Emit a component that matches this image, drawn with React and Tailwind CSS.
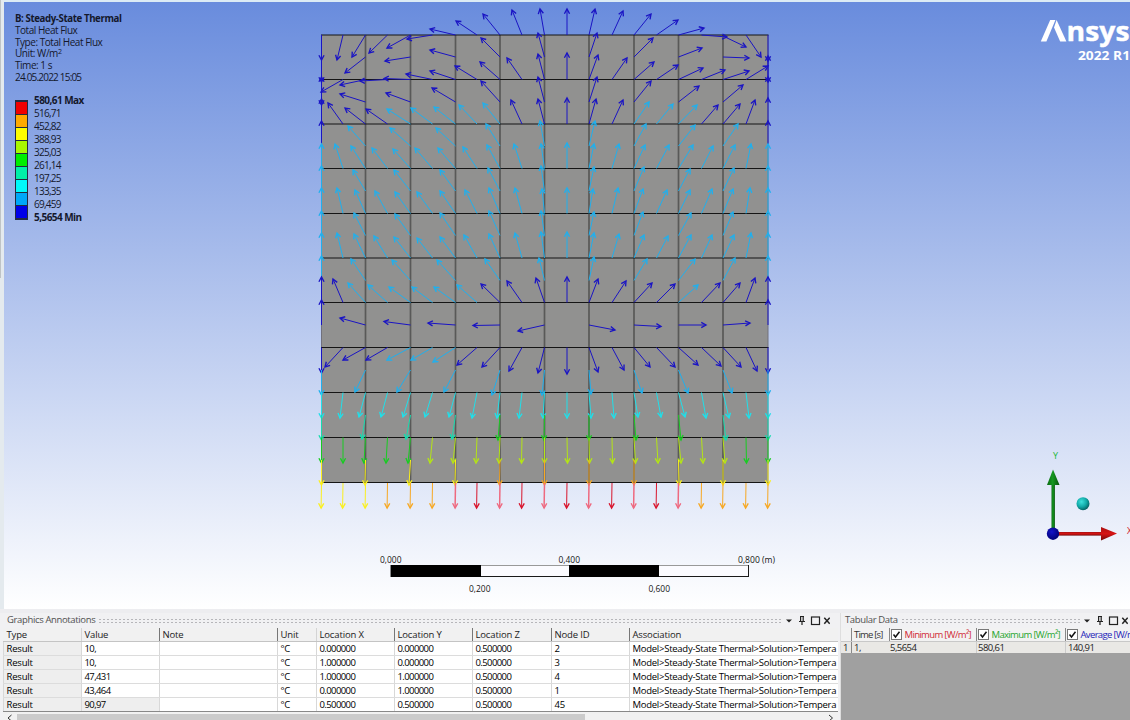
import React from "react";

const B = "#1a14c4";
const C = "#1fb0ee";
const Q = "#1fe0ea";
const T = "#16dcae";
const G = "#18cc22";
const L = "#b4e416";
const Y = "#fbf01e";
const O = "#f7a823";
const R = "#d8142c";
const P = "#ee6a80";

const X = [321.5, 343, 365.5, 387.5, 410.5, 432.5, 455.5, 477, 500, 522, 544.5, 567, 589, 612, 634, 656.5, 678.5, 701.5, 723, 746, 768];

// Each vector: [column index, start y, tip x, tip y, colour]
const full = (y, color, tips) => tips.map(([i, tx, ty, c]) => [i, y, tx, ty, c || color]);

const vectors = [
  ...full(35, B, [[0, 321, 60], [1, 337, 60], [2, 352, 57], [3, 369, 53], [4, 387, 48], [5, 407, 39], [6, 430, 29], [7, 456, 21], [8, 483, 14], [9, 512, 10], [10, 540, 9], [11, 567, 9], [12, 595, 9], [13, 623, 11], [14, 651, 14], [15, 678, 20], [16, 704, 28], [17, 727, 37], [19, 761, 57], [20, 768, 61]]),
  [18, 36, 746, 47, B],
  ...full(57, B, [[0, 321, 82], [2, 345, 73], [4, 385, 61], [6, 430, 50], [8, 481, 38], [10, 538, 33], [12, 597, 33], [14, 653, 38], [16, 702, 48], [18, 749, 58], [20, 768, 82]]),
  ...full(79.5, B, [[0, 321, 105], [1, 321, 92], [2, 340, 85], [3, 360, 81], [4, 384, 78.5], [5, 406, 74], [6, 430, 71], [7, 455, 66], [8, 480, 62], [9, 507, 58], [10, 538, 54], [11, 567, 53], [12, 598, 55], [13, 627, 58], [14, 654, 62], [15, 678, 65], [16, 703, 68], [17, 725, 70], [18, 749, 71], [19, 768, 66], [20, 768, 56]]),
  ...full(102, B, [[0, 321, 77], [2, 340, 94], [4, 386, 93], [6, 432, 88], [8, 481, 81], [10, 538, 77], [12, 597, 77], [14, 651, 81], [16, 699, 86], [18, 743, 85], [20, 768, 77]]),
  ...full(124, B, [[0, 321, 99], [1, 328, 103], [2, 345, 108], [3, 366, 109], [4, 387, 109, C], [5, 411, 108, C], [6, 434, 107, C], [7, 459, 105, C], [8, 483, 103, C], [9, 511, 100], [10, 538, 99], [11, 567, 98], [12, 596, 99], [13, 623, 100], [14, 649, 102, C], [15, 673, 104, C], [16, 697, 105, C], [17, 718, 105], [18, 740, 104], [19, 755, 100], [20, 768, 98]]),
  ...full(146, C, [[0, 321, 121, B], [2, 348, 126], [4, 390, 128], [6, 436, 128], [8, 486, 124], [10, 540, 121], [12, 595, 121], [14, 646, 124], [16, 695, 125], [18, 738, 124], [20, 768, 121, B]]),
  ...full(168.5, C, [[0, 321, 144], [1, 335, 144], [2, 351, 146], [3, 372, 148], [4, 393, 149], [5, 415, 148], [6, 438, 148], [7, 463, 147], [8, 487, 145], [9, 514, 144], [10, 541, 144], [11, 567, 143], [12, 594, 144], [13, 619, 144], [14, 645, 145], [15, 669, 145], [16, 693, 145], [17, 713, 146], [18, 735, 145], [19, 751, 144], [20, 768, 144]]),
  ...full(191, C, [[0, 321, 166], [2, 353, 170], [4, 394, 170], [6, 440, 170], [8, 488, 168], [10, 541, 166], [12, 594, 167], [14, 644, 167], [16, 690, 169], [18, 734, 168], [20, 768, 166]]),
  ...full(213.5, C, [[0, 321, 188], [1, 337, 188], [2, 355, 190], [3, 375, 191], [4, 395, 192], [5, 417, 192], [6, 440, 191], [7, 465, 190], [8, 489, 188], [9, 515, 188], [10, 542, 189], [11, 567, 188], [12, 593, 189], [13, 618, 188], [14, 643, 189], [15, 667, 190], [16, 690, 190], [17, 712, 189], [18, 733, 189], [19, 750, 188], [20, 768, 188]]),
  ...full(235.5, C, [[0, 321, 211], [2, 354, 213], [4, 395, 214], [6, 440, 213], [8, 489, 211], [10, 541, 211], [12, 594, 212], [14, 643, 212], [16, 691, 213], [18, 733, 212], [20, 768, 211]]),
  ...full(258, C, [[0, 321, 233], [1, 337, 233], [2, 354, 234], [3, 374, 236], [4, 394, 237], [5, 417, 238], [6, 440, 237], [7, 464, 235], [8, 489, 234], [9, 515, 233], [10, 541, 232], [11, 567, 232], [12, 594, 233], [13, 619, 234], [14, 644, 235], [15, 668, 236], [16, 691, 235], [17, 712, 235], [18, 734, 235], [19, 751, 233], [20, 768, 233]]),
  ...full(280.5, C, [[0, 321, 256], [2, 351, 259], [4, 392, 260], [6, 437, 260], [8, 485, 259], [10, 539, 258], [12, 594, 257], [14, 647, 259], [16, 695, 259], [18, 735, 258], [20, 768, 256]]),
  ...full(302.5, B, [[0, 321, 277], [1, 333, 279], [2, 348, 283, C], [3, 368, 285, C], [4, 389, 287, C], [5, 412, 287, C], [6, 434, 287, C], [7, 457, 285, C], [8, 481, 284], [9, 507, 281], [10, 536, 278], [11, 567, 277], [12, 598, 279], [13, 626, 281], [14, 652, 283], [15, 675, 284], [16, 698, 285, C], [17, 720, 283], [18, 740, 283], [19, 755, 278], [20, 768, 277]]),
  ...full(325, B, [[0, 321, 300], [2, 340, 318], [4, 384, 321.5], [6, 428, 323], [8, 473, 325.5], [10, 518, 331], [12, 615, 330], [14, 661, 326.5], [16, 706, 325], [18, 750, 323], [20, 768, 300]]),
  ...full(347.5, B, [[0, 321, 373], [1, 325, 367], [2, 343, 360], [3, 366, 360], [4, 387, 360, C], [5, 411, 360, C], [6, 433, 362, C], [7, 457, 365], [8, 482, 367], [9, 509, 371], [10, 538, 373], [11, 567, 374], [12, 598, 372], [13, 624, 370], [14, 650, 367], [15, 675, 367], [16, 698, 365], [17, 721, 366], [18, 741, 367], [19, 757, 371], [20, 768, 373]]),
  ...full(370, C, [[0, 321, 395], [2, 355, 392], [4, 397, 392], [6, 444, 392], [8, 492, 395], [10, 542, 395], [12, 591, 394], [14, 642, 393], [16, 688, 393], [18, 732, 393], [20, 768, 395]]),
  ...full(392.5, Q, [[0, 321, 418], [1, 340, 418], [2, 359, 417], [3, 381, 417], [4, 403, 417], [5, 425, 417], [6, 449, 417], [7, 472, 418], [8, 497, 418], [9, 519, 418], [10, 543, 418], [11, 567, 418], [12, 591, 418], [13, 614, 418], [14, 638, 417], [15, 661, 417], [16, 685, 417], [17, 706, 418], [18, 729, 418], [19, 749, 418], [20, 768, 418]]),
  ...full(415, T, [[0, 321, 440], [2, 362, 439], [4, 406, 439], [6, 452, 439], [8, 498, 440, G], [10, 544, 440, G], [12, 589, 440, G], [14, 636, 440, G], [16, 681, 440, G], [18, 726, 440], [20, 768, 440]]),
  ...full(437.5, L, [[0, 321, 463, G], [1, 343, 463, G], [2, 364, 463, G], [3, 386, 463, G], [4, 408, 463, G], [5, 430, 463], [6, 453, 463], [7, 476, 463], [8, 499, 463], [9, 521.5, 463], [10, 544.5, 463], [11, 567.5, 463], [12, 589.5, 463], [13, 612.5, 463], [14, 635.5, 463], [15, 658, 463], [16, 681, 463], [17, 703, 463], [18, 725, 463], [19, 746.5, 463, G], [20, 768, 463, G]]),
  ...full(460, Y, [[0, 321, 485], [2, 365, 485], [4, 409, 485], [6, 455, 485], [8, 499.5, 485, O], [10, 544.5, 485, O], [12, 589, 485, O], [14, 634, 485, O], [16, 679, 485], [18, 723, 485], [20, 768, 485]]),
  ...[Y, Y, Y, O, O, O, P, R, P, R, P, R, P, R, P, R, P, O, O, O, O].map((c, i) => [i, 483, X[i] - 0.4, 508, c]),
];

function Vector({ x, y, tx, ty, color }) {
  const a = Math.atan2(ty - y, tx - x);
  const s = 5.4;
  const p = (d) => `${tx - s * Math.cos(a + d)} ${ty - s * Math.sin(a + d)}`;
  return (
    <g stroke={color} fill="none">
      <path d={`M${x} ${y}L${tx} ${ty}`} strokeWidth={color === P ? 1.5 : 1} />
      <path d={`M${p(0.5)}L${tx} ${ty}L${p(-0.5)}`} strokeWidth="1.35" />
    </g>
  );
}

function Field() {
  const rows = [35, 79.5, 124, 168.5, 213.5, 258, 302.5, 347.5, 392.5, 437.5, 482.5];
  return (
    <g>
      <rect x="321.5" y="35" width="446.5" height="447.5" fill="#919190" />
      {X.filter((_, i) => i % 2 === 0).map((x, i) => (
        <path key={i} d={`M${x} 35V482.5`} stroke={i === 0 || i === 10 ? "#70707c" : "#595958"} strokeWidth={i === 0 || i === 10 ? 1 : 1.7} />
      ))}
      {rows.map((y) => <path key={y} d={`M321 ${y}H768.5`} stroke="#151515" strokeWidth="1.1" />)}
      {vectors.map(([i, y, tx, ty, c], k) => <Vector key={k} x={X[i]} y={y} tx={i === 0 && tx === 321 ? 321.5 : tx} ty={ty} color={c} />)}
    </g>
  );
}

function Ruler() {
  const label = (x, y, w, t) => (
    <text x={x} y={y} textLength={w} lengthAdjust="spacingAndGlyphs" fontSize="9.3" fill="#151515">{t}</text>
  );
  return (
    <g>
      <rect x="391" y="565.5" width="357.5" height="11" fill="#fbfbff" stroke="#1a1a1a" />
      <path d="M391 565.5H748" stroke="#999" />
      <path d="M391 565H481V577H391ZM569 565H659V577H569Z" fill="#000" />
      {label(380, 562.5, 21.5, "0,000")}
      {label(558.5, 562.5, 21.5, "0,400")}
      {label(738, 562.5, 37, "0,800 (m)")}
      {label(469, 591.5, 21.5, "0,200")}
      {label(648.5, 591.5, 21.5, "0,600")}
    </g>
  );
}

function Triad() {
  return (
    <g>
      <defs>
        <radialGradient id="teal" cx=".38" cy=".35" r=".7"><stop offset="0" stopColor="#3ee0dc" /><stop offset=".55" stopColor="#12aaa8" /><stop offset="1" stopColor="#055a5c" /></radialGradient>
        <radialGradient id="blue" cx=".4" cy=".35" r=".7"><stop offset="0" stopColor="#1414c8" /><stop offset="1" stopColor="#000070" /></radialGradient>
        <linearGradient id="green" x1="0" x2="1"><stop offset="0" stopColor="#0a6a12" /><stop offset=".45" stopColor="#159820" /><stop offset="1" stopColor="#07520b" /></linearGradient>
        <linearGradient id="red" x1="0" x2="0" y1="0" y2="1"><stop offset="0" stopColor="#a81010" /><stop offset=".5" stopColor="#d81414" /><stop offset="1" stopColor="#720808" /></linearGradient>
      </defs>
      <rect x="1051.5" y="484" width="3.4" height="46" fill="url(#green)" />
      <path d="M1053 469.5L1059.5 485H1047Z" fill="url(#green)" />
      <rect x="1056" y="532" width="46" height="3.6" fill="url(#red)" />
      <path d="M1117 533.5L1101 527V540.5Z" fill="url(#red)" />
      <circle cx="1053" cy="533.7" r="6.2" fill="url(#blue)" />
      <circle cx="1083" cy="503.7" r="6.5" fill="url(#teal)" />
      <text x="1053" y="459" fontSize="9" fill="#20b838">Y</text>
      <text x="1127" y="534" fontSize="9" fill="#d02030">X</text>
    </g>
  );
}

const scale = [
  ["bg-[#f00000]", "516,71"],
  ["bg-[#ffaa00]", "452,82"],
  ["bg-[#fdfd00]", "388,93"],
  ["bg-[#a8f800]", "325,03"],
  ["bg-[#00ee00]", "261,14"],
  ["bg-[#00f0a8]", "197,25"],
  ["bg-[#00fafa]", "133,35"],
  ["bg-[#00a8f8]", "69,459"],
  ["bg-[#0000e8]", "5,5654 Min"],
];

function Legend() {
  return (
    <div className="pl-[15px] pt-[11px] text-[10px] leading-[11.75px] text-[#14182c]">
      <div className="text-[9.7px] font-bold tracking-[-0.41px]">B: Steady-State Thermal</div>
      <div className="tracking-[-0.48px]">Total Heat Flux</div>
      <div className="tracking-[-0.46px]">Type: Total Heat Flux</div>
      <div className="tracking-[-0.44px]">Unit: W/m<span className="relative -top-[3px] text-[7px] leading-none">2</span></div>
      <div className="tracking-[-0.46px]">Time: 1 s</div>
      <div className="tracking-[-0.8px]">24.05.2022 15:05</div>
      <div className="mt-[16px] flex items-start">
        <div className="w-[13px] border border-b-2 border-t-2 border-[#222b40]">
          {scale.map(([c], i) => <div key={i} className={`h-[12.9px] ${i ? "border-t border-[#222b40]" : ""} ${c}`} />)}
        </div>
        <div className="-mt-[6px] ml-[6px] leading-[13.02px] tracking-[-0.75px]">
          <div className="font-bold tracking-[-0.55px]">580,61 Max</div>
          {scale.map(([, t], i) => <div key={t} className={i === 8 ? "font-bold tracking-[-0.55px]" : ""}>{t}</div>)}
        </div>
      </div>
    </div>
  );
}

function Logo() {
  return (
    <svg className="absolute right-0 top-0 h-[80px] w-[130px]" viewBox="0 0 130 80" fill="#fff">
      <path d="M50.2 18H55.4L46.4 39.4H40.8Z" />
      <path d="M56.6 18L66.4 39.4H60.2L54 25.6Z" />
      <text x="66.5" y="39.4" textLength="63" lengthAdjust="spacingAndGlyphs" fontFamily="Open Sans" fontWeight="700" fontSize="26.5" stroke="#fff" strokeWidth=".4">nsys</text>
      <text x="78" y="58.3" textLength="52" lengthAdjust="spacingAndGlyphs" fontFamily="Open Sans" fontWeight="700" fontSize="12.6">2022 R1</text>
    </svg>
  );
}

function PanelTitle({ title, className }) {
  return (
    <div className={`flex h-[15px] items-center pl-[4px] text-[9.5px] text-[#505050] ${className}`}>
      <span className="whitespace-nowrap tracking-[-0.36px]">{title}</span>
      <div className="ml-[3px] mr-[4px] h-[6px] grow bg-[radial-gradient(circle,#b6b6ba_0.7px,transparent_0.9px)] bg-[length:4px_3px]" />
      <svg width="44" height="12" viewBox="0 0 44 12" fill="none" stroke="#222" strokeWidth="1.2">
        <path d="M0 4.5H6L3 7.5Z" fill="#222" stroke="none" />
        <path d="M14 1.5H18M14.6 1.5V6.5M17.2 1.5V6.5M13 6.5H19M16 6.5V10" />
        <rect x="25.5" y="2" width="8" height="7.5" />
        <path d="M38.3 2.8L43.7 8.8M43.7 2.8L38.3 8.8" strokeWidth="1.5" />
      </svg>
    </div>
  );
}

const cols = "grid grid-cols-[78px_78px_118px_39px_78px_78px_79px_78px_1fr]";
const data = [
  ["10,", "0.000000", "0.000000", "2"],
  ["10,", "1.000000", "0.000000", "3"],
  ["47,431", "1.000000", "1.000000", "4"],
  ["43,464", "0.000000", "1.000000", "1"],
  ["90,97", "0.500000", "0.500000", "45"],
];

function Annotations() {
  return (
    <section className="flex w-[838px] shrink-0 flex-col pl-[3px]">
      <PanelTitle title="Graphics Annotations" className="pr-[8px]" />
      <div className={`${cols} h-[14px] border-b border-[#c4c4c4] bg-[#f1f1f1] text-[9.5px] leading-[13px] text-[#222]`}>
        {["Type", "Value", "Note", "Unit", "Location X", "Location Y", "Location Z", "Node ID", "Association"].map((h, i) => (
          <div key={h} className={`truncate border-l pl-[2.5px] tracking-[-0.15px] ${i === 0 ? "border-transparent" : i === 1 || i === 4 ? "border-[#d4d4d4]" : "border-[#777]"}`}>{h}</div>
        ))}
      </div>
      {data.map(([v, x, y, n], r) => (
        <div key={r} className={`${cols} h-[14px] border-b bg-white text-[9.5px] leading-[13px] text-black ${r === 4 ? "border-[#888]" : "border-[#dcdcdc]"}`}>
          {["Result", v, "", "°C", x, y, "0.500000", n, "Model>Steady-State Thermal>Solution>Tempera"].map((t, i) => (
            <div key={i} className={`overflow-hidden whitespace-nowrap border-l border-[#d8d8d8] pl-[2.5px] ${i === 1 || (i > 3 && i < 7) ? "tracking-[-0.6px]" : i === 8 ? "tracking-[-0.26px]" : "tracking-[-0.2px]"} ${i === 0 || (i === 1 && r === 4) ? "bg-[#eeeeee]" : ""}`}>{t}</div>
          ))}
        </div>
      ))}
      <div className="flex h-[9px] items-start bg-[#f1f1f1]">
        <svg width="14" height="9" fill="none" stroke="#333"><path d="M8.5 3L5 6L8.5 9" /></svg>
        <div className="mt-[2px] h-[7px] w-[568px] bg-[#cbcbcb]" />
        <div className="grow" />
        <svg width="12" height="9" fill="none" stroke="#333"><path d="M3 3L6.5 6L3 9" /></svg>
      </div>
    </section>
  );
}

function Check({ label, color }) {
  return (
    <div className="flex items-center overflow-hidden border-l border-[#888] pl-px">
      <svg className="shrink-0" width="11" height="11" viewBox="0 0 11 11" fill="#fff" stroke="#777"><rect x=".5" y=".5" width="10" height="10" /><path d="M2.5 5.5L4.5 8L8.5 2.8" fill="none" stroke="#111" strokeWidth="1.5" /></svg>
      <span className={`ml-[2.5px] whitespace-nowrap tracking-[-0.65px] ${color}`}>{label}</span>
    </div>
  );
}

function Tabular() {
  const grid = "grid grid-cols-[10px_38px_87px_89px_1fr]";
  return (
    <section className="flex min-w-0 grow flex-col overflow-hidden border-l border-[#dedede] bg-[#a0a0a0]">
      <div className="bg-[#f1f1f3]"><PanelTitle title="Tabular Data" className="pr-[2px]" /></div>
      <div className={`${grid} h-[14px] border-b border-[#c8c8c8] bg-[#f2f2f2] text-[9.5px] leading-[13px] text-[#333]`}>
        <div />
        <div className="whitespace-nowrap border-l border-[#888] pl-[2px] tracking-[-0.8px]">Time [s]</div>
        <Check label="Minimum [W/m²]" color="text-[#d02a34]" />
        <Check label="Maximum [W/m²]" color="text-[#25a52c]" />
        <Check label="Average [W/m²]" color="text-[#2424b8]" />
      </div>
      <div className={`${grid} h-[11px] bg-[#e9e8e5] text-[9.5px] leading-[11px] tracking-[-0.55px] text-[#222]`}>
        <div className="pl-[2px]">1</div>
        <div className="border-l border-[#888] pl-[2px]">1,</div>
        <div className="pl-px">5,5654</div>
        <div className="border-l border-[#ccc] pl-px">580,61</div>
        <div className="border-l border-[#ccc] pl-[2px]">140,91</div>
      </div>
    </section>
  );
}

export default function App() {
  return (
    <main className="flex h-[720px] w-[1130px] flex-col overflow-hidden bg-[#f1f1f3] font-['Open_Sans','Noto_Sans',sans-serif]">
      <div className="relative h-[609px] shrink-0 border-t-2 border-[#dcebf5] bg-[linear-gradient(#698cdd,#ffffff)]">
        <svg className="absolute -top-[2px] left-0 h-[609px] w-[1130px]" viewBox="0 0 1130 609">
          <rect width="4" height="609" fill="#e4eaee" />
          <path d="M.5 0V278" stroke="#bfc4c6" />
          <Field />
          <Ruler />
          <Triad />
        </svg>
        <Legend />
        <Logo />
      </div>
      <div className="flex grow border-t-4 border-[#ededf0]">
        <Annotations />
        <div className="w-[2px] shrink-0" />
        <Tabular />
      </div>
    </main>
  );
}
